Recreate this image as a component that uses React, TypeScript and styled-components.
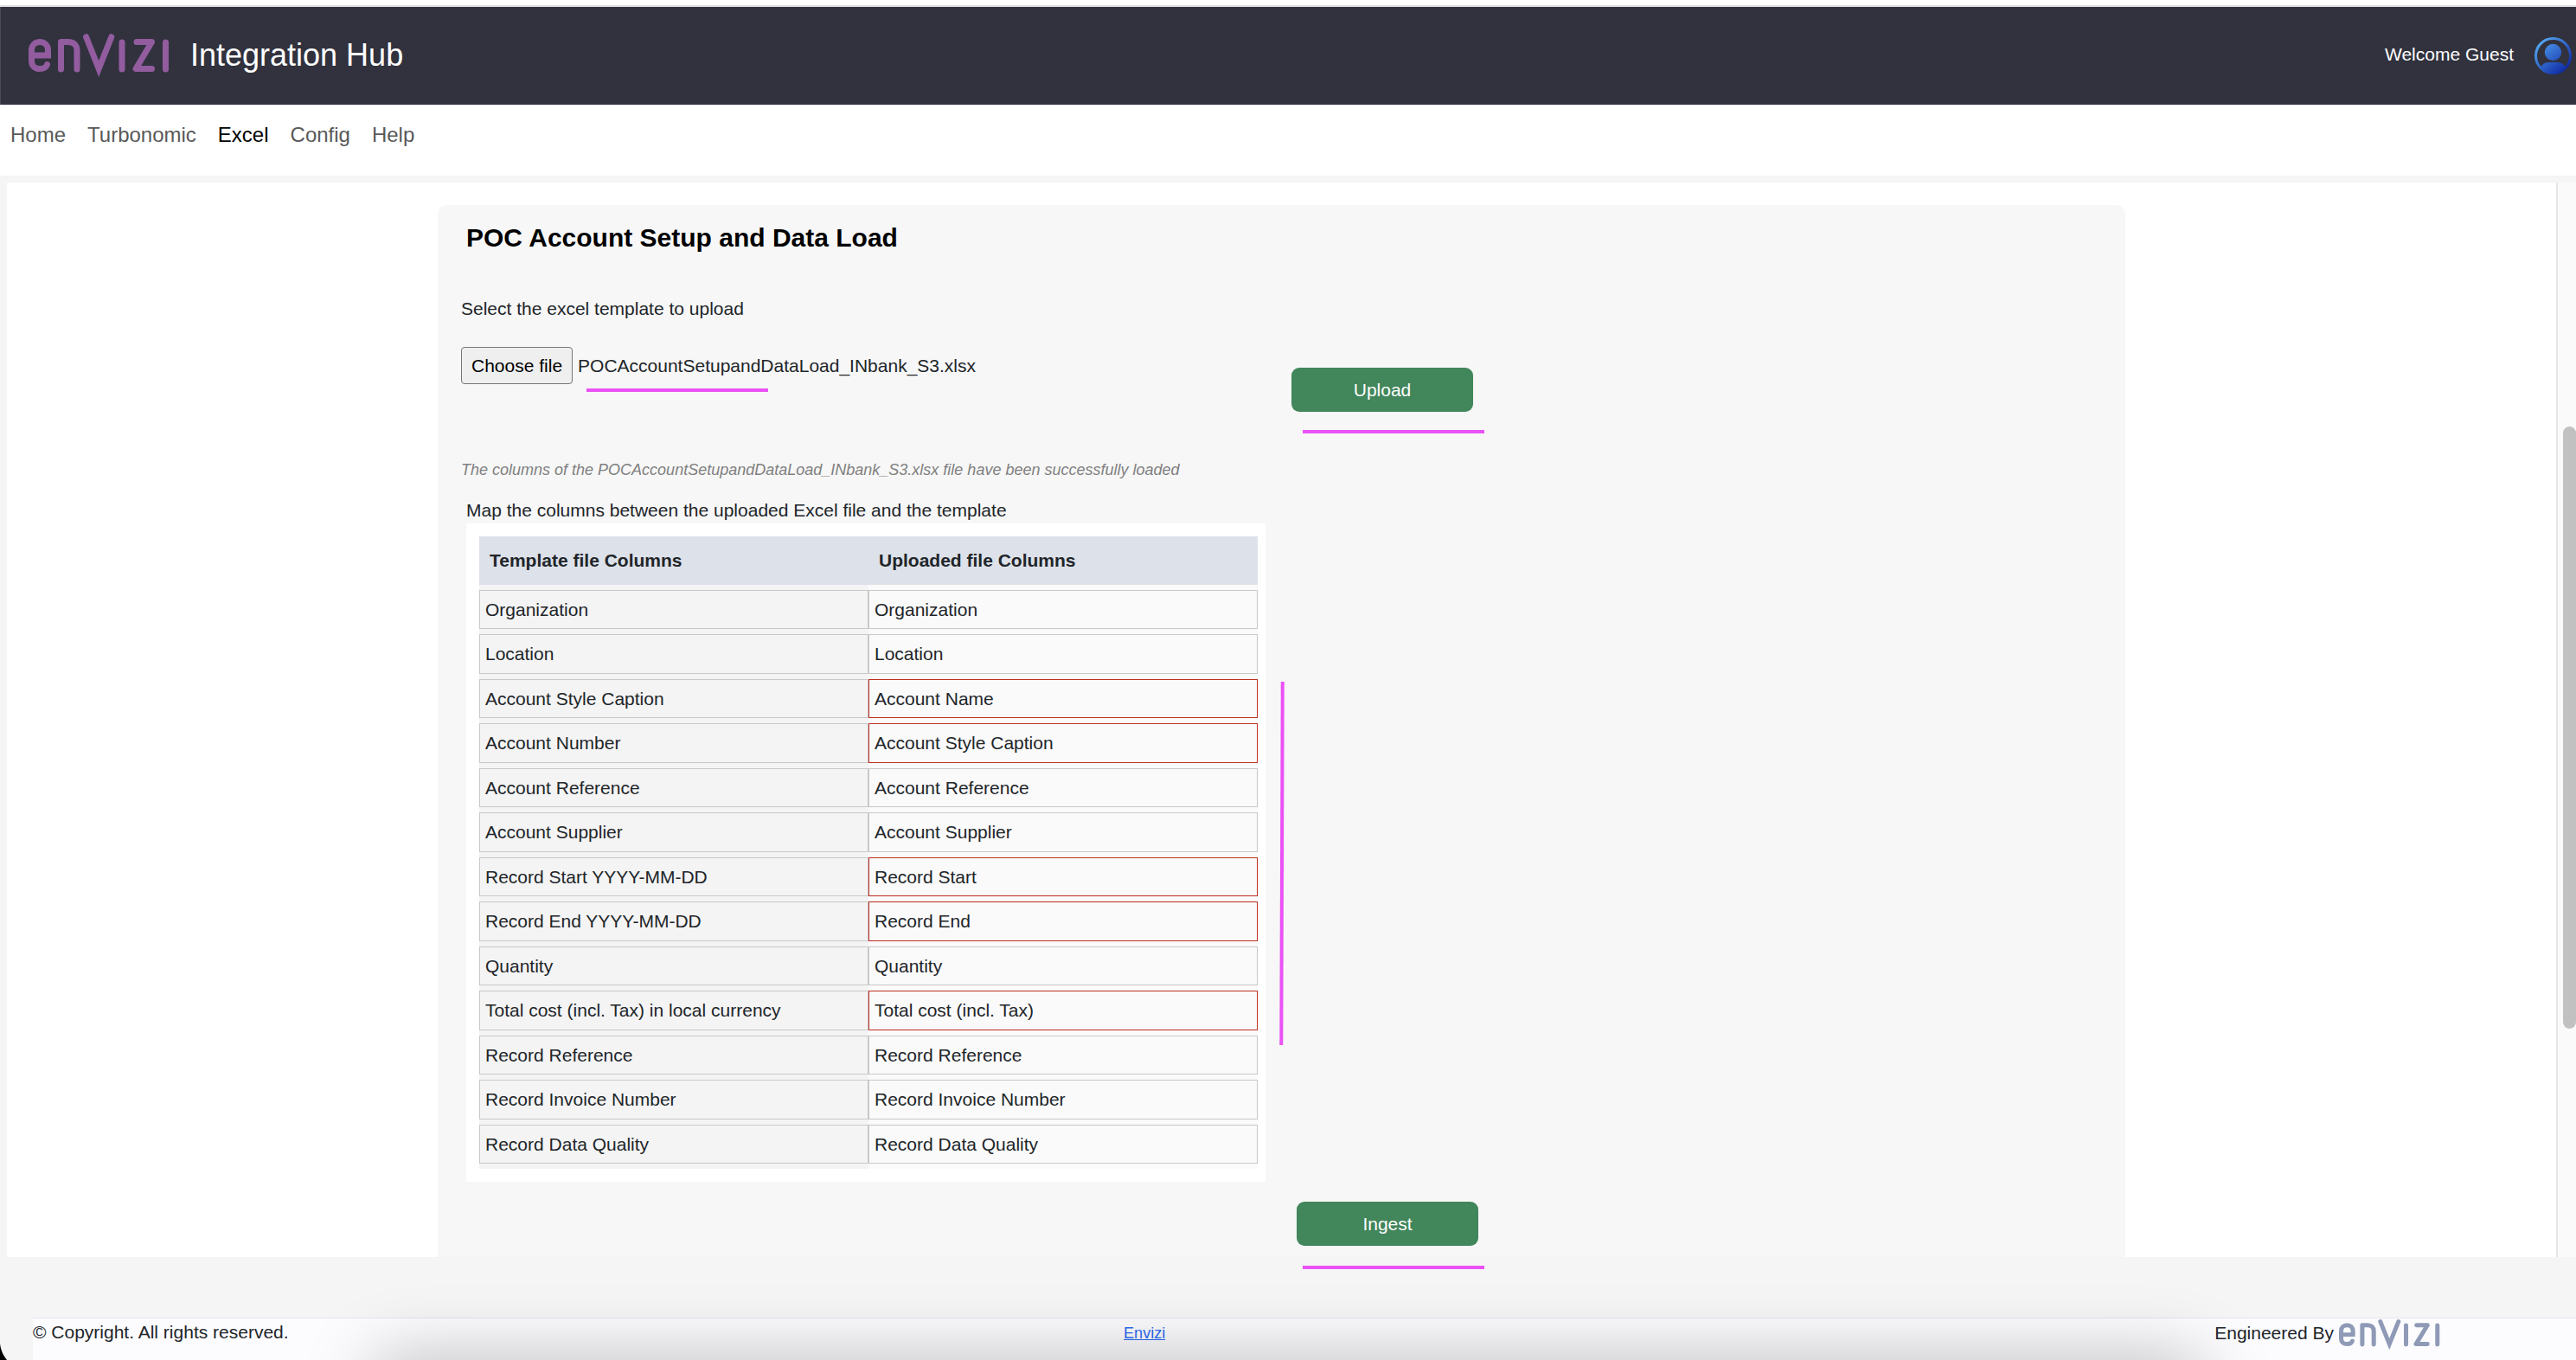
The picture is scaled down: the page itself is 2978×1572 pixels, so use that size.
import React, { useState } from "react";
import styled, { createGlobalStyle, css } from "styled-components";

const GlobalStyle = createGlobalStyle`
  *, *::before, *::after { box-sizing: border-box; }
  body {
    margin: 0;
    background: #f5f5f5;
    color: #212529;
    font-family: "Liberation Sans", Arial, Helvetica, sans-serif;
    font-size: 21px;
    line-height: 30px;
  }
`;

const Page = styled.div`
  position: relative;
  display: flex;
  flex-direction: column;
  min-height: 100vh;
  overflow: hidden;
`;

const Header = styled.header`
  display: flex;
  align-items: center;
  justify-content: space-between;
  height: 121px;
  padding: 0 5px 0 33px;
  border-top: 8px solid #ffffff;
  background: #31323e;
  box-shadow: inset 1px 0 0 #4a4b56, 0 -115px 0 0 #ffffff;
`;

const Brand = styled.div`
  display: flex;
  align-items: center;
  gap: 24px;
`;

const AppName = styled.h1`
  margin: 0;
  padding-bottom: 2px;
  color: #ffffff;
  font-size: 36px;
  font-weight: 400;
  line-height: 44px;
`;

const Account = styled.div`
  display: flex;
  align-items: center;
  gap: 24px;
  color: #ffffff;
`;

const Welcome = styled.span`
  padding-bottom: 4px;
`;

const Nav = styled.nav`
  display: flex;
  gap: 25px;
  height: 82px;
  padding: 20px 12px;
  background: #ffffff;
`;

const NavLink = styled.a<{ $active: boolean }>`
  color: ${(p) => (p.$active ? "#000000" : "#595959")};
  font-size: 24px;
  text-decoration: none;
`;

const Main = styled.main`
  display: flex;
  flex: 1;
  margin: 8px 0 70px 8px;
  background: #ffffff;
`;

const Content = styled.div`
  display: flex;
  flex: 1;
  justify-content: center;
  padding-top: 26px;
`;

const ScrollTrack = styled.div`
  display: flex;
  flex-direction: column;
  width: 23px;
  padding: 282px 0 0 6px;
  border-left: 2px solid #e7e7e7;
  background: #fafafa;
`;

const ScrollThumb = styled.div`
  height: 696px;
  border-radius: 8px;
  background: #c1c1c1;
`;

const Card = styled.section`
  width: 100%;
  max-width: 1951px;
  padding: 20px 27px 13px;
  border-radius: 10px 10px 0 0;
  background: #f7f7f7;
`;

const Title = styled.h2`
  margin: 0 0 49px;
  padding-left: 6px;
  color: #000000;
  font-size: 30px;
  line-height: 36px;
`;

const UploadForm = styled.form`
  display: grid;
  grid-template-columns: 960px 1fr;
`;

const Prompt = styled.p`
  margin: 0 0 29px;
`;

const FileRow = styled.div`
  display: flex;
  align-items: center;
  gap: 6px;
`;

const FileInput = styled.input`
  width: 1px;
  height: 1px;
  margin: 0 -7px 0 0;
  opacity: 0;
`;

const FileButton = styled.label`
  padding: 5px 11px;
  border: 1px solid #767676;
  border-radius: 4px;
  background: #efefef;
  color: #000000;
  line-height: 31px;
`;

const Anchor = styled.div`
  position: relative;
  width: max-content;
`;

const mark = css`
  position: absolute;
  background: #ea52f5;
`;

const Underline = styled.span<{ $left: number; $gap: number }>`
  ${mark}
  top: calc(100% + ${(p) => p.$gap}px);
  left: ${(p) => p.$left}px;
  width: 210px;
  height: 4px;
`;

const SideMark = styled.span`
  ${mark}
  top: 183px;
  left: calc(100% + 17px);
  width: 4px;
  height: 420px;
  transform: rotate(0.2deg);
`;

const UploadCell = styled.div`
  padding-top: 83px;
`;

const ActionButton = styled.button`
  display: block;
  width: 210px;
  height: 51px;
  padding: 0;
  border: 0;
  border-radius: 9px;
  background: #42865b;
  color: #ffffff;
  font: inherit;
`;

const Status = styled.p`
  margin: 55px 0 20px;
  color: #808080;
  font-size: 18px;
  font-style: italic;
  line-height: 24px;
`;

const Mapping = styled.div`
  padding-left: 6px;
`;

const MappingPrompt = styled.p`
  margin: 0;
`;

const TableBox = styled.div`
  position: relative;
  width: 924px;
  padding: 15px 9px 15px 15px;
  background: #ffffff;
`;

const Table = styled.table`
  width: 100%;
  border-collapse: collapse;
  table-layout: fixed;
`;

const HeadCell = styled.th`
  height: 56px;
  padding: 0 12px;
  background: #dde1e9;
  font-weight: 700;
  text-align: left;
`;

const Cell = styled.td<{ $tone: string }>`
  padding: 6px 0 0;
  background: ${(p) => p.$tone};
`;

const Box = styled.div<{ $changed?: boolean }>`
  height: 45px;
  padding: 0 6px;
  border: 1px solid ${(p) => (p.$changed ? "#bd2f20" : "#c8c8c8")};
  line-height: 43px;
`;

const Row = styled.tr`
  &:nth-child(even) ${Box} {
    height: 46px;
  }
  &:last-child ${Cell} {
    padding-bottom: 6px;
  }
`;

const IngestRow = styled.div`
  padding: 23px 0 0 960px;
`;

const Footer = styled.footer`
  display: grid;
  grid-template-columns: 1fr 1fr auto;
  align-items: start;
  height: 49px;
  margin-left: 38px;
  padding: 0 157px 0 0;
  border-top: 1px solid #e4e6f2;
  background: #fcfcff;
`;

const FooterText = styled.span`
  line-height: 32px;
`;

const FooterLink = styled.a`
  color: #2a6af0;
  font-size: 18px;
  line-height: 34px;
`;

const Credit = styled.div`
  display: flex;
  gap: 6px;
  padding-top: 1px;
`;

const DockShadow = styled.div`
  position: absolute;
  right: 440px;
  bottom: -60px;
  left: 440px;
  height: 50px;
  border-radius: 25px;
  box-shadow: 0 0 80px 14px rgba(0, 0, 0, 0.25);
  pointer-events: none;
`;

const Corner = styled.svg`
  position: absolute;
  bottom: 0;
  left: 0;
`;

const TopEdge = styled.div`
  position: absolute;
  top: 6px;
  right: 0;
  left: 0;
  height: 2px;
  background: #e0e0e0;
`;

function Logo({ width, height, color }: { width: number; height: number; color: string }) {
  return (
    <svg
      width={width}
      height={height}
      viewBox="0 0 163 51"
      preserveAspectRatio="none"
      fill="none"
      stroke={color}
      strokeWidth="7"
      strokeLinecap="round"
      role="img"
      aria-label="Envizi logo"
    >
      <path d="M3.5 25H22.5V19C22.5 13.5 18.5 9.5 13 9.5S3.5 13.5 3.5 19V31.5C3.5 37 7.5 40.5 13 40.5C17.5 40.5 20.5 38.5 21.5 35.5" />
      <path d="M37.5 41V9.5H46C52.5 9.5 56 13.5 56 19V41" strokeLinejoin="round" />
      <path d="M66.6 3.7L81.2 40.5L95.8 3.7" />
      <path d="M108 10V41" />
      <path d="M125 9.5H142.5L124 40.5H142.5" strokeLinejoin="round" />
      <path d="M158.5 10V41" />
    </svg>
  );
}

function Avatar() {
  return (
    <svg width="43" height="43" viewBox="0 0 43 43" role="img" aria-label="User">
      <defs>
        <linearGradient id="ring" x1="0.1" y1="0.1" x2="0.85" y2="0.9">
          <stop offset="0" stopColor="#55a8f2" />
          <stop offset="1" stopColor="#0f2aa3" />
        </linearGradient>
        <linearGradient id="person" gradientUnits="userSpaceOnUse" x1="8" y1="5" x2="35" y2="40">
          <stop offset="0" stopColor="#4f9cee" />
          <stop offset="1" stopColor="#0f2aa3" />
        </linearGradient>
      </defs>
      <circle cx="21.5" cy="21.5" r="20" fill="none" stroke="url(#ring)" strokeWidth="3" />
      <circle cx="21.5" cy="17.5" r="9.7" fill="url(#person)" />
      <path d="M7 35C9 31 12 29 16 29H27C31 29 34 31 36 35C32 39.5 27 42 21.5 42S11 39.5 7 35Z" fill="url(#person)" />
    </svg>
  );
}

const links = ["Home", "Turbonomic", "Excel", "Config", "Help"];

const columns: [string, string][] = [
  ["Organization", "Organization"],
  ["Location", "Location"],
  ["Account Style Caption", "Account Name"],
  ["Account Number", "Account Style Caption"],
  ["Account Reference", "Account Reference"],
  ["Account Supplier", "Account Supplier"],
  ["Record Start YYYY-MM-DD", "Record Start"],
  ["Record End YYYY-MM-DD", "Record End"],
  ["Quantity", "Quantity"],
  ["Total cost (incl. Tax) in local currency", "Total cost (incl. Tax)"],
  ["Record Reference", "Record Reference"],
  ["Record Invoice Number", "Record Invoice Number"],
  ["Record Data Quality", "Record Data Quality"],
];

export default function App() {
  const [fileName, setFileName] = useState("POCAccountSetupandDataLoad_INbank_S3.xlsx");

  return (
    <Page>
      <GlobalStyle />
      <Header>
        <Brand>
          <Logo width={163} height={51} color="#925c9f" />
          <AppName>Integration Hub</AppName>
        </Brand>
        <Account>
          <Welcome>Welcome Guest</Welcome>
          <Avatar />
        </Account>
      </Header>
      <TopEdge />
      <Nav>
        {links.map((name) => (
          <NavLink key={name} href={`#${name.toLowerCase()}`} $active={name === "Excel"}>
            {name}
          </NavLink>
        ))}
      </Nav>
      <Main>
        <Content>
          <Card>
            <Title>POC Account Setup and Data Load</Title>
            <UploadForm onSubmit={(e) => e.preventDefault()}>
              <div>
                <Prompt>Select the excel template to upload</Prompt>
                <FileRow>
                  <FileInput
                    id="template"
                    type="file"
                    accept=".xlsx"
                    onChange={(e) => setFileName(e.target.files?.[0]?.name ?? fileName)}
                  />
                  <FileButton htmlFor="template">Choose file</FileButton>
                  <Anchor>
                    {fileName}
                    <Underline $left={10} $gap={11} />
                  </Anchor>
                </FileRow>
              </div>
              <UploadCell>
                <Anchor>
                  <ActionButton type="submit">Upload</ActionButton>
                  <Underline $left={13} $gap={21} />
                </Anchor>
              </UploadCell>
            </UploadForm>
            <Status>The columns of the {fileName} file have been successfully loaded</Status>
            <Mapping>
              <MappingPrompt>Map the columns between the uploaded Excel file and the template</MappingPrompt>
              <TableBox>
                <Table>
                  <thead>
                    <tr>
                      <HeadCell scope="col">Template file Columns</HeadCell>
                      <HeadCell scope="col">Uploaded file Columns</HeadCell>
                    </tr>
                  </thead>
                  <tbody>
                    {columns.map(([template, uploaded]) => (
                      <Row key={template}>
                        <Cell $tone="#f4f4f4">
                          <Box>{template}</Box>
                        </Cell>
                        <Cell $tone="#fafafa">
                          <Box $changed={template !== uploaded}>{uploaded}</Box>
                        </Cell>
                      </Row>
                    ))}
                  </tbody>
                </Table>
                <SideMark />
              </TableBox>
              <IngestRow>
                <Anchor>
                  <ActionButton type="button">Ingest</ActionButton>
                  <Underline $left={7} $gap={23} />
                </Anchor>
              </IngestRow>
            </Mapping>
          </Card>
        </Content>
        <ScrollTrack>
          <ScrollThumb />
        </ScrollTrack>
      </Main>
      <Footer>
        <FooterText>© Copyright. All rights reserved.</FooterText>
        <FooterLink href="#envizi">Envizi</FooterLink>
        <Credit>
          <FooterText>Engineered By</FooterText>
          <Logo width={117} height={36} color="#8e9ab6" />
        </Credit>
      </Footer>
      <DockShadow />
      <Corner width="8" height="19" viewBox="0 0 8 19">
        <path d="M0 0C1 8 4 14 8 19H0Z" fill="#000000" />
      </Corner>
    </Page>
  );
}
